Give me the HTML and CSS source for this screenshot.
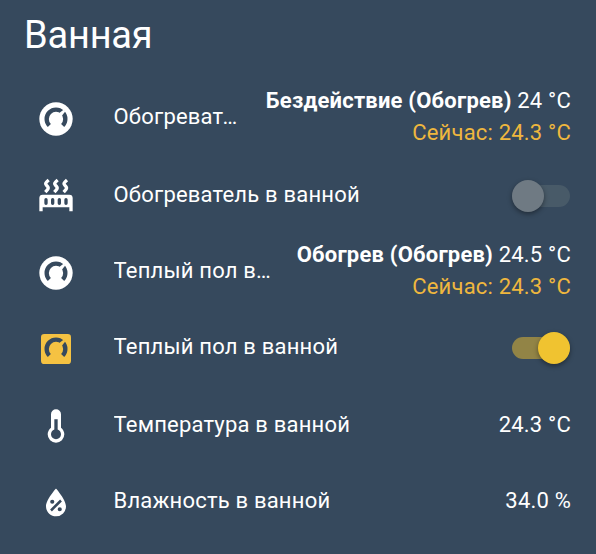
FILE: index.html
```
<!DOCTYPE html>
<html lang="ru">
<head>
  <meta charset="UTF-8" />
  <meta name="viewport" content="width=device-width, initial-scale=1.0" />
  <title>Ванная</title>
  <link rel="stylesheet" href="styles.css">
</head>
<body>
  <!-- Shared icons -->
  <svg class="sprite" width="0" height="0">
    <symbol id="dial" viewBox="0 0 24 24">
      <path class="gauge" d="M8 15.9A5.6 5.6 0 1 1 16 15.9" />
      <path class="needle" d="M13.2 13.2L10.8 10.8L16.5 6.5L17.5 7.5Z" />
    </symbol>
  </svg>

  <div class="card">
    <h1>Ванная</h1>

    <div class="row">
      <svg class="icon" viewBox="0 0 24 24"><circle cx="12" cy="12" r="10" /><use href="#dial" /></svg>
      <div class="name">Обогреватель в ванной</div>
      <div class="climate">
        <div><strong>Бездействие (Обогрев)</strong> 24 °C</div>
        <div class="current">Сейчас: 24.3 °C</div>
      </div>
    </div>

    <div class="row shifted">
      <svg class="icon" viewBox="0 0 24 24">
        <path class="steam" d="M7.6 2.4C5 4.6 5.6 4.8 6.7 6S7.6 7.6 5.6 9.7M13 2.4C10.4 4.6 11 4.8 12.1 6S13 7.6 11 9.7M18.6 2.4C16 4.6 16.6 4.8 17.7 6S18.6 7.6 16.6 9.7" />
        <path fill-rule="evenodd" d="M4 11.2H20A2 2 0 0 1 22 13.2V21.2H20V18.8H4V21.2H2V13.2A2 2 0 0 1 4 11.2M6 13.2A1 1 0 0 0 5 14.2V16.4A1 1 0 0 0 7 16.4V14.2A1 1 0 0 0 6 13.2M10 13.2A1 1 0 0 0 9 14.2V16.4A1 1 0 0 0 11 16.4V14.2A1 1 0 0 0 10 13.2M14 13.2A1 1 0 0 0 13 14.2V16.4A1 1 0 0 0 15 16.4V14.2A1 1 0 0 0 14 13.2M18 13.2A1 1 0 0 0 17 14.2V16.4A1 1 0 0 0 19 16.4V14.2A1 1 0 0 0 18 13.2Z" />
      </svg>
      <div class="name">Обогреватель в ванной</div>
      <div class="switch"></div>
    </div>

    <div class="row">
      <svg class="icon" viewBox="0 0 24 24"><circle cx="12" cy="12" r="10" /><use href="#dial" /></svg>
      <div class="name">Теплый пол в ванной</div>
      <div class="climate">
        <div><strong>Обогрев (Обогрев)</strong> 24.5 °C</div>
        <div class="current">Сейчас: 24.3 °C</div>
      </div>
    </div>

    <div class="row">
      <svg class="icon active" viewBox="0 0 24 24"><rect x="3" y="3" width="18" height="18" rx="2" /><use href="#dial" /></svg>
      <div class="name">Теплый пол в ванной</div>
      <div class="switch on"></div>
    </div>

    <div class="row shifted">
      <svg class="icon" viewBox="0 0 24 24">
        <path d="M17,17A5,5 0 0,1 12,22A5,5 0 0,1 7,17C7,15.36 7.79,13.91 9,13V5A3,3 0 0,1 12,2A3,3 0 0,1 15,5V13C16.21,13.91 17,15.36 17,17M11,8V14.17C9.83,14.58 9,15.69 9,17A3,3 0 0,0 12,20A3,3 0 0,0 15,17C15,15.69 14.17,14.58 13,14.17V8H11Z" />
      </svg>
      <div class="name">Температура в ванной</div>
      <div class="state">24.3 °C</div>
    </div>

    <div class="row">
      <svg class="icon" viewBox="0 0 24 24">
        <path d="M12,3.25C12,3.25 6,10 6,14C6,17.32 8.69,20 12,20A6,6 0 0,0 18,14C18,10 12,3.25 12,3.25M14.47,9.97L15.53,11.03L9.53,17.03L8.47,15.97M9.75,10A1.25,1.25 0 0,1 11,11.25A1.25,1.25 0 0,1 9.75,12.5A1.25,1.25 0 0,1 8.5,11.25A1.25,1.25 0 0,1 9.75,10M14.25,14.5A1.25,1.25 0 0,1 15.5,15.75A1.25,1.25 0 0,1 14.25,17A1.25,1.25 0 0,1 13,15.75A1.25,1.25 0 0,1 14.25,14.5Z" />
      </svg>
      <div class="name">Влажность в ванной</div>
      <div class="state">34.0 %</div>
    </div>
  </div>
</body>
</html>
```
FILE: styles.css
```
* {
  box-sizing: border-box;
}
body {
  margin: 0;
  background: #36495d;
  color: #fff;
  font-family: Roboto, sans-serif;
  font-size: 22px;
  line-height: 32px;
  letter-spacing: 0.2px;
}
.sprite {
  display: block;
}
.card {
  height: 554px;
  padding: 0 25px 0 24px;
  overflow: hidden;
}
h1 {
  height: 79px;
  margin: 0;
  padding-top: 11px;
  font-size: 38px;
  font-weight: 400;
  line-height: 48px;
  letter-spacing: -0.2px;
}
.row {
  display: flex;
  align-items: center;
  height: 76.7px;
}
.icon {
  flex: none;
  width: 40px;
  height: 40px;
  margin: 4px 37.5px 0 12px;
  fill: #fff;
}
.icon.active {
  fill: #f5c242;
}
.gauge {
  fill: none;
  stroke: #36495d;
  stroke-width: 2.6;
}
.steam {
  fill: none;
  stroke: #fff;
  stroke-width: 2;
  stroke-linejoin: round;
}
.name {
  flex: 1;
  overflow: hidden;
  text-overflow: ellipsis;
  white-space: nowrap;
}
.shifted .name,
.shifted .state {
  padding-top: 2px;
}
.climate {
  margin-left: 25px;
  text-align: right;
  white-space: nowrap;
}
.current {
  color: #efb73e;
}
/* Toggle: the track is the element, the knob lies over it */
.switch {
  position: relative;
  width: 58px;
  height: 22px;
  margin: 2px 1px 0 0;
  border-radius: 11px;
  background: #485a68;
}
.shifted .switch {
  margin-top: 3px;
}
.switch::after {
  content: "";
  position: absolute;
  top: -5px;
  left: 0;
  width: 32px;
  height: 32px;
  border-radius: 50%;
  background: #6f7a83;
  box-shadow: 0 2px 5px rgba(0, 0, 0, 0.4);
}
.switch.on {
  background: #928446;
}
.switch.on::after {
  left: 26px;
  background: #f0c330;
}
```
